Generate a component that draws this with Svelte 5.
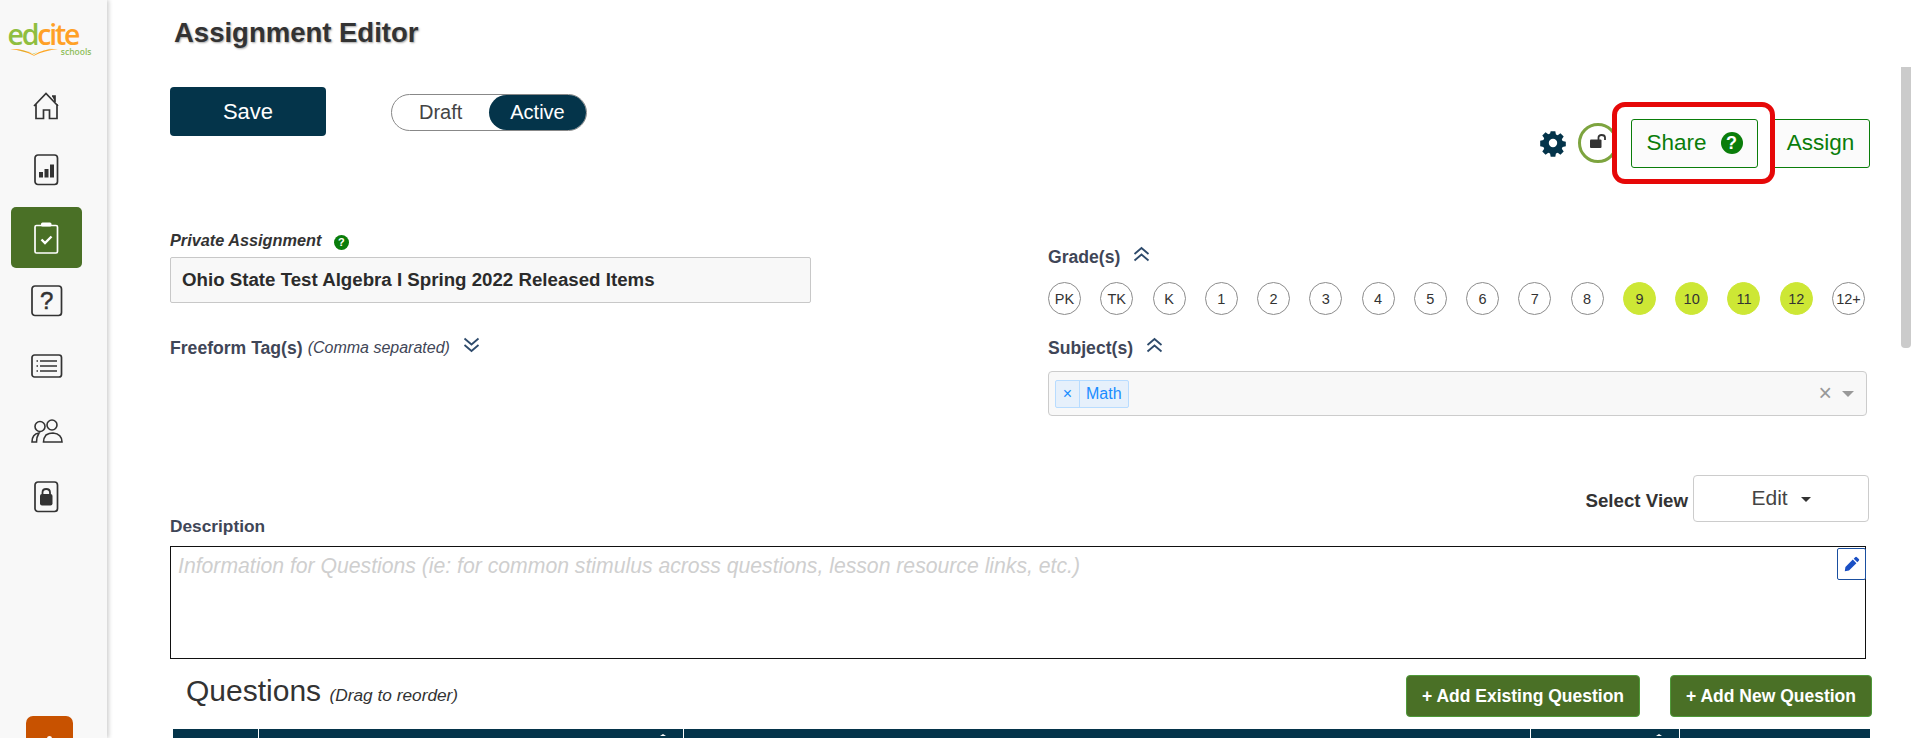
<script>
const grades = ['PK', 'TK', 'K', '1', '2', '3', '4', '5', '6', '7', '8', '9', '10', '11', '12', '12+'];
const selected = ['9', '10', '11', '12'];
</script>

<div class="page">
    <nav class="sidebar">
        <div class="logo">
            <div class="logo-word"><span class="ed">ed</span><span class="cite">cite</span></div>
            <svg class="logo-book" width="48" height="8" viewBox="0 0 50 8">
                <path d="M0 1 Q14 0 25 7 Q36 0 50 1 Q36 2.5 25 8 Q14 2.5 0 1Z" fill="#ffa726" />
                <path d="M8 3 Q18 2 25 6 Q32 1 48 0 Q34 1 25 5.5 Q18 2.5 8 3Z" fill="#8dbb3f" />
            </svg>
            <div class="logo-sub">schools</div>
        </div>

        <a class="nav-item home">
            <svg width="27" height="28" viewBox="0 0 27 28" fill="none" stroke="#333" stroke-width="1.7">
                <path d="M1 14 L13 1.5 L25 14 M3 12 V26.5 H10.5 V18 H16.5 V26.5 H24 V12" />
                <path d="M19 4 H22 V10" fill="#333" />
            </svg>
        </a>
        <a class="nav-item chart">
            <svg width="25" height="32" viewBox="0 0 25 32" fill="none">
                <rect x="1" y="1" width="22.5" height="29.5" rx="3" stroke="#333" stroke-width="1.7" />
                <rect x="5" y="18" width="4" height="5.5" fill="#333" />
                <rect x="10.5" y="15" width="4" height="8.5" fill="#333" />
                <rect x="16" y="10.5" width="4" height="13" fill="#333" />
            </svg>
        </a>
        <a class="nav-item active">
            <svg width="25" height="32" viewBox="0 0 25 32" fill="none" stroke="#fff">
                <rect x="1" y="3.5" width="22.5" height="27.5" rx="1.5" stroke-width="1.7" />
                <rect x="7" y="0.5" width="10.5" height="4" rx="1.5" fill="#fff" stroke="none" />
                <path d="M7.5 17.5 L11 21 L17.5 14.5" stroke-width="2.4" />
            </svg>
        </a>
        <a class="nav-item question">
            <svg width="32" height="32" viewBox="0 0 32 32" fill="none">
                <rect x="1" y="1" width="29.5" height="29.5" rx="3" stroke="#333" stroke-width="1.7" />
                <text x="15.7" y="24" text-anchor="middle" class="q-mark">?</text>
            </svg>
        </a>
        <a class="nav-item list">
            <svg width="32" height="24" viewBox="0 0 32 24" fill="none" stroke="#333">
                <rect x="1" y="1" width="29.5" height="22" rx="2.5" stroke-width="1.7" />
                <path d="M9 7 H26 M9 12 H26 M9 17 H26" stroke-width="1.5" />
                <path d="M5.5 7 H7 M5.5 12 H7 M5.5 17 H7" stroke-width="1.5" />
            </svg>
        </a>
        <a class="nav-item people">
            <svg width="32" height="24" viewBox="0 0 32 24" fill="none" stroke="#333" stroke-width="1.6">
                <circle cx="9" cy="7.5" r="5" />
                <circle cx="21" cy="6" r="5" />
                <path d="M1 23 Q1 15 8 14 Q5.5 18 5.5 23 Z" />
                <path d="M12.5 23 Q12.5 19 15 16 Q18 14 22 14 Q31 15 31 23 Z" />
            </svg>
        </a>
        <a class="nav-item lock">
            <svg width="25" height="32" viewBox="0 0 25 32" fill="none">
                <rect x="1" y="1" width="22.5" height="29.5" rx="3" stroke="#333" stroke-width="1.7" />
                <rect x="6" y="13" width="12.5" height="11.5" rx="2" fill="#333" />
                <path d="M8.5 14 V11.5 Q8.5 8 12.2 8 Q16 8 16 11.5 V14" stroke="#333" stroke-width="1.8" />
            </svg>
        </a>
        <div class="help-tab"><span class="help-dot"></span></div>
    </nav>

    <main class="content">
        <h1>Assignment Editor</h1>

        <div class="action-row">
            <div class="save-group">
                <button class="save">Save</button>
                <div class="status-toggle">
                    <span class="draft">Draft</span>
                    <span class="live">Active</span>
                </div>
            </div>
            <div class="tools">
                <svg class="gear" width="28" height="28" viewBox="0 0 24 24">
                    <path fill="#04344a" fill-rule="evenodd" d="M9.8 0.8h4.4l.6 3.1 1.7.7 2.6-1.8 3.1 3.1-1.8 2.6.7 1.7 3.1.6v4.4l-3.1.6-.7 1.7 1.8 2.6-3.1 3.1-2.6-1.8-1.7.7-.6 3.1H9.8l-.6-3.1-1.7-.7-2.6 1.8-3.1-3.1 1.8-2.6-.7-1.7-3.1-.6V9.8l3.1-.6.7-1.7-1.8-2.6 3.1-3.1 2.6 1.8 1.7-.7zM12 8a4 4 0 1 0 0 8 4 4 0 0 0 0-8z" transform="translate(1.2 1.2) scale(.9)" />
                </svg>
                <div class="lock-ring">
                    <svg width="18" height="14" viewBox="0 0 18 14" fill="none">
                        <rect x="0" y="5.5" width="11.5" height="8.5" rx="1" fill="#333" />
                        <path d="M8.5 6 V3.5 Q8.5 1 11.5 1 Q15 1 15 3.5 V6" stroke="#333" stroke-width="1.8" />
                    </svg>
                </div>
                <div class="share-wrap">
                    <button class="outline share">
                        Share
                        <span class="help-icon big">?</span>
                    </button>
                </div>
                <button class="outline assign">Assign</button>
            </div>
        </div>

        <div class="fields">
            <div class="col-left">
                <div class="private-label">Private Assignment <span class="help-icon">?</span></div>
                <div class="title-input">Ohio State Test Algebra I Spring 2022 Released Items</div>
                <div class="label tags-label">
                    Freeform Tag(s) <em>(Comma separated)</em>
                    <svg class="chev" width="17" height="16" viewBox="0 0 17 16" fill="none" stroke="#2d4a6b" stroke-width="1.8">
                        <path d="M1.5 1.5 L8.5 7.5 L15.5 1.5 M1.5 8 L8.5 14 L15.5 8" />
                    </svg>
                </div>
            </div>
            <div class="col-right">
                <div class="label">
                    Grade(s)
                    <svg class="chev" width="17" height="16" viewBox="0 0 17 16" fill="none" stroke="#2d4a6b" stroke-width="1.8">
                        <path d="M1.5 14.5 L8.5 8.5 L15.5 14.5 M1.5 8 L8.5 2 L15.5 8" />
                    </svg>
                </div>
                <div class="grades">
                    {#each grades as g}
                        <span class="grade" class:on={selected.includes(g)}>{g}</span>
                    {/each}
                </div>
                <div class="label subject-label">
                    Subject(s)
                    <svg class="chev" width="17" height="16" viewBox="0 0 17 16" fill="none" stroke="#2d4a6b" stroke-width="1.8">
                        <path d="M1.5 14.5 L8.5 8.5 L15.5 14.5 M1.5 8 L8.5 2 L15.5 8" />
                    </svg>
                </div>
                <div class="subject-select">
                    <div class="tag"><span class="tag-x">×</span><span class="tag-text">Math</span></div>
                    <span class="clear">×</span>
                    <span class="caret"></span>
                </div>
            </div>
        </div>

        <div class="view-row">
            <span class="view-label">Select View</span>
            <button class="view-btn">Edit <span class="mini-caret"></span></button>
        </div>

        <div class="desc-label">Description</div>
        <div class="desc-box">
            <span class="placeholder">Information for Questions (ie: for common stimulus across questions, lesson resource links, etc.)</span>
            <button class="pencil">
                <svg width="16" height="16" viewBox="0 0 16 16">
                    <path fill="#1a4fc4" d="M11.2 1.2 a1.2 1.2 0 0 1 1.7 0 L14.8 3.1 a1.2 1.2 0 0 1 0 1.7 L13.3 6.3 L9.7 2.7 Z M8.8 3.6 L12.4 7.2 L5 14.6 L0.8 15.2 L1.4 11 Z" />
                </svg>
            </button>
        </div>

        <div class="questions-head">
            <div class="q-title">Questions <em>(Drag to reorder)</em></div>
            <div class="q-buttons">
                <button class="add existing">+ Add Existing Question</button>
                <button class="add new">+ Add New Question</button>
            </div>
        </div>

        <div class="table-head">
            <div class="th c1"></div>
            <div class="th c2"><span class="tick"></span></div>
            <div class="th c3"></div>
            <div class="th c4"><span class="tick"></span></div>
            <div class="th c5"></div>
        </div>
    </main>

    <div class="scrollbar"><div class="thumb"></div></div>
</div>

<style>
    :global(body) {
        overflow: hidden;
        background: #fff;
    }

    .page {
        display: flex;
        height: 738px;
        overflow: hidden;
        font-family: "Liberation Sans", Arial, sans-serif;
        color: #333;
    }

    /* ------------------Sidebar------------------ */
    .sidebar {
        width: 107px;
        flex: none;
        background: #f8f8f8;
        box-shadow: 2px 0 4px rgba(0, 0, 0, 0.18);
        display: flex;
        flex-direction: column;
        align-items: center;
        position: relative;
    }

    .logo {
        width: 84px;
        height: 40px;
        margin-top: 22px;
        margin-left: -14px;
        display: flex;
        flex-direction: column;
        align-items: flex-start;
        font-family: "Open Sans", sans-serif;
    }

    .logo-word {
        font-size: 28.5px;
        line-height: 25px;
        letter-spacing: -2.2px;
        font-weight: 600;
        margin-left: 3px;
    }
    .ed {color: #8fbe3f;}
    .cite {color: #ffa026;}

    .logo-book {
        margin: 1px 0 0 5px;
    }

    .logo-sub {
        font-size: 8.5px;
        font-weight: 600;
        line-height: 10px;
        color: #8fbe5a;
        align-self: flex-end;
        margin-top: -9px;
        margin-right: -3px;
    }

    .nav-item {
        width: 71px;
        display: flex;
        justify-content: center;
        align-items: center;
        margin-left: -14px;
    }

    .home {margin-top: 30px; height: 28px;}
    .chart {margin-top: 34px; height: 32px;}
    .active {
        margin-top: 21px;
        height: 61px;
        background: #4a7026;
        border-radius: 5px;
    }
    .question {margin-top: 17px; height: 32px;}
    .list {margin-top: 37px; height: 24px;}
    .people {margin-top: 41px; height: 24px;}
    .lock {margin-top: 38px; height: 32px;}

    .q-mark {
        font-family: "Liberation Sans", sans-serif;
        font-size: 24px;
        font-weight: 400;
        fill: #333;
        stroke: #333;
        stroke-width: 0.5;
    }

    .help-tab {
        width: 47px;
        height: 40px;
        background: #c85200;
        border-radius: 7px 7px 0 0;
        margin-top: auto;
        margin-bottom: -18px;
        margin-left: -8px;
        display: flex;
        justify-content: center;
    }

    .help-dot {
        width: 5px;
        height: 5px;
        margin-top: 20px;
        border-radius: 50%;
        background: #fff;
    }

    /* ------------------Main------------------ */
    .content {
        flex: 1;
        min-width: 0;
        padding-left: 63px;
        padding-right: 35px;
        display: flex;
        flex-direction: column;
    }

    .content > * {
        flex: none;
    }

    h1 {
        margin: 18px 0 0 4px;
        font-size: 27.5px;
        line-height: 30px;
        font-weight: 700;
        color: #333;
        text-shadow: 1px 1px 2px rgba(0, 0, 0, 0.35);
    }

    .action-row {
        display: flex;
        justify-content: space-between;
        margin-top: 39px;
        height: 141px;
    }

    .save-group {
        display: flex;
        align-items: flex-start;
    }

    button {
        font-family: inherit;
        cursor: pointer;
    }

    .save {
        width: 156px;
        height: 49px;
        background: #04344a;
        color: #fff;
        border: none;
        border-radius: 4px;
        font-size: 22px;
    }

    .status-toggle {
        margin-left: 65px;
        margin-top: 7px;
        width: 196px;
        height: 37px;
        box-sizing: border-box;
        border: 1px solid #888;
        border-radius: 19px;
        display: flex;
        align-items: center;
        justify-content: space-between;
        font-size: 20px;
    }

    .draft {
        margin-left: 27px;
        color: #444;
    }

    .live {
        width: 97px;
        height: 35px;
        line-height: 35px;
        text-align: center;
        color: #fff;
        background: #04344a;
        border-radius: 18px;
    }

    .tools {
        display: flex;
        align-items: center;
        align-self: flex-start;
        margin-top: 15px;
        height: 82px;
        margin-right: -4px;
    }

    .gear {
        margin-right: 11px;
    }

    .lock-ring {
        width: 40px;
        height: 40px;
        box-sizing: border-box;
        border: 3px solid #7da43f;
        border-radius: 50%;
        display: flex;
        align-items: center;
        justify-content: center;
        margin-right: -6px;
        padding-left: 2px;
        padding-bottom: 5px;
    }

    .share-wrap {
        position: relative;
        z-index: 1;
        width: 163px;
        height: 82px;
        box-sizing: border-box;
        border: 5px solid #e60808;
        border-radius: 13px;
        padding-left: 2px;
        display: flex;
        align-items: center;
        justify-content: center;
        background: #fff;
        margin-right: -4px;
    }

    .outline {
        height: 49px;
        box-sizing: border-box;
        background: #fbfbfb;
        border: 1px solid #0a7d0a;
        border-radius: 3px;
        color: #0a7d0a;
        font-size: 22.5px;
        display: flex;
        align-items: center;
        justify-content: center;
    }

    .share {
        width: 127px;
        gap: 14px;
    }

    .assign {
        width: 99px;
    }

    .help-icon {
        display: inline-flex;
        align-items: center;
        justify-content: center;
        width: 15px;
        height: 15px;
        border-radius: 50%;
        background: #0a7d0a;
        color: #fff;
        font-size: 11px;
        font-weight: 700;
        font-style: normal;
        margin-left: 8px;
        vertical-align: 0;
    }

    .help-icon.big {
        width: 22px;
        height: 22px;
        font-size: 18px;
        margin-left: 0;
    }

    .fields {
        display: flex;
        height: 248px;
    }

    .col-left {
        width: 641px;
        margin-right: 237px;
        flex: none;
    }

    .col-right {
        flex: 1;
        margin-top: 19px;
    }

    .private-label {
        height: 29px;
        font-size: 16.3px;
        font-weight: 700;
        font-style: italic;
        line-height: 24px;
    }

    .title-input {
        height: 46px;
        box-sizing: border-box;
        line-height: 43px;
        padding-left: 11px;
        background: #f8f8f8;
        border: 1px solid #c8c8c8;
        border-radius: 2px;
        font-size: 18.7px;
        font-weight: 700;
        color: #2b2b2b;
    }

    .label {
        font-size: 17.6px;
        font-weight: 700;
        line-height: 20px;
        color: #3f4657;
        display: flex;
        align-items: center;
        gap: 13px;
    }

    .label em {
        font-size: 16px;
        font-weight: 400;
        margin-left: -8px;
    }

    .tags-label {
        margin-top: 35px;
    }

    .chev {
        margin-top: -6px;
    }

    .grades {
        margin-top: 15px;
        width: 817px;
        display: flex;
        justify-content: space-between;
    }

    .grade {
        width: 33px;
        height: 33px;
        box-sizing: border-box;
        border: 1px solid #8c8c8c;
        border-radius: 50%;
        display: flex;
        align-items: center;
        justify-content: center;
        font-size: 14.5px;
        color: #333;
        white-space: nowrap;
    }

    .grade.on {
        background: #cde735;
        border-color: #cde735;
    }

    .subject-label {
        margin-top: 23px;
    }

    .subject-select {
        margin-top: 13px;
        width: 819px;
        height: 45px;
        box-sizing: border-box;
        background: #f8f8f8;
        border: 1px solid #ccc;
        border-radius: 4px;
        display: flex;
        align-items: center;
        padding: 0 12px 0 6px;
    }

    .tag {
        display: flex;
        height: 28px;
        box-sizing: border-box;
        background: #e6f0fb;
        border: 1px solid #b8dcff;
        border-radius: 2px;
        color: #1a8cff;
        font-size: 16px;
        line-height: 26px;
    }

    .tag-x {
        width: 23px;
        text-align: center;
        border-right: 1px solid #b8dcff;
    }

    .tag-text {
        padding: 0 6px;
        width: 48px;
        box-sizing: border-box;
    }

    .clear {
        margin-left: auto;
        color: #999;
        font-size: 23px;
        line-height: 23px;
        margin-right: 10px;
    }

    .caret {
        width: 0;
        height: 0;
        border-left: 6px solid transparent;
        border-right: 6px solid transparent;
        border-top: 6px solid #999;
    }

    .view-row {
        display: flex;
        justify-content: flex-end;
        align-items: center;
        height: 47px;
        margin-top: -1px;
        margin-right: -3px;
        gap: 5px;
    }

    .view-label {
        font-size: 18.7px;
        font-weight: 700;
        color: #333;
        margin-top: 4px;
    }

    .view-btn {
        width: 176px;
        height: 47px;
        padding-bottom: 3px;
        background: #fff;
        border: 1px solid #ccc;
        border-radius: 4px;
        font-size: 21px;
        color: #444;
    }

    .mini-caret {
        display: inline-block;
        width: 0;
        height: 0;
        margin-left: 7px;
        vertical-align: 3px;
        border-left: 5px solid transparent;
        border-right: 5px solid transparent;
        border-top: 5px solid #333;
    }

    .desc-label {
        margin-top: -6px;
        font-size: 17.3px;
        font-weight: 700;
        line-height: 20px;
        color: #3f4657;
    }

    .desc-box {
        position: relative;
        margin-top: 10px;
        width: 1696px;
        height: 113px;
        box-sizing: border-box;
        border: 1.5px solid #111;
        padding: 8px 7px;
        font-size: 21.2px;
        font-style: italic;
        color: #cfcfcf;
        line-height: 22px;
    }

    .pencil {
        position: absolute;
        top: 1px;
        right: -1px;
        width: 29px;
        height: 32px;
        padding: 0;
        background: #fff;
        border: 1px solid #1a4fa0;
        border-radius: 2px;
        display: flex;
        align-items: center;
        justify-content: center;
    }

    .questions-head {
        display: flex;
        justify-content: space-between;
        margin-top: 15px;
        height: 55px;
    }

    .q-title {
        margin-left: 16px;
        margin-top: -1px;
        font-size: 30px;
        line-height: 36px;
        color: #333;
    }

    .q-title em {
        font-size: 17.3px;
    }

    .q-buttons {
        display: flex;
        gap: 30px;
        margin-right: -6px;
        margin-top: 1px;
    }

    .add {
        height: 42px;
        background: #4a7026;
        border: 1px solid #4f9a3a;
        border-radius: 4px;
        color: #fff;
        font-size: 17.5px;
        font-weight: 700;
    }

    .existing {width: 234px;}
    .new {width: 202px;}

    .table-head {
        margin-left: 3px;
        width: 1697px;
        height: 30px;
        display: flex;
        gap: 1px;
        background: #fff;
    }

    .th {
        background: #04344a;
        position: relative;
    }

    .c1 {width: 85px;}
    .c2 {width: 424px;}
    .c3 {flex: 1;}
    .c4 {width: 148px;}
    .c5 {width: 190px;}

    .tick {
        position: absolute;
        right: 17px;
        top: 5px;
        width: 0;
        height: 0;
        border-left: 3px solid transparent;
        border-right: 3px solid transparent;
        border-bottom: 2px solid #fff;
    }

    .scrollbar {
        width: 10px;
        flex: none;
        padding-top: 67px;
    }

    .thumb {
        height: 281px;
        background: #cbcbcb;
        border-radius: 0 0 4px 4px;
    }
</style>
